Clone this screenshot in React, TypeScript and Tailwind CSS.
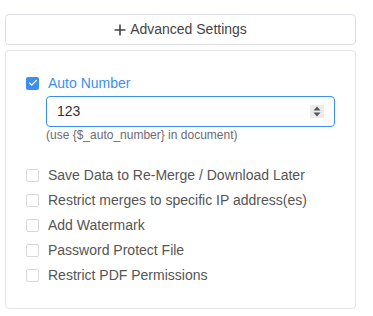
import { Check } from 'lucide-react';

const options = [
    'Save Data to Re-Merge / Download Later',
    'Restrict merges to specific IP address(es)',
    'Add Watermark',
    'Password Protect File',
    'Restrict PDF Permissions',
];

export default function App() {
    return (
        <div className="w-[373px] h-[316px] bg-white pt-[14px] pl-[5px] font-['Liberation_Sans',Arial,sans-serif]">
            {/* Toggle button */}
            <button className="w-[351px] h-[31px] flex items-center justify-center gap-[4px] border border-[#dcdde3] rounded-[4px] text-[14px] text-[#444]">
                <svg width="12" height="12" viewBox="0 0 12 12">
                    <path d="M6 0.5 V11.5 M0.5 6 H11.5" stroke="#444" strokeWidth="1.6" />
                </svg>
                Advanced Settings
            </button>

            {/* Settings panel */}
            <div className="w-[351px] h-[259px] mt-[5px] border border-[#e3e4ea] rounded-[4px] pt-[24px] pl-[20px]">
                <label className="flex items-center gap-[9px] h-[16px]">
                    <span className="w-[13px] h-[13px] rounded-[2px] bg-[#3b8ff0] flex items-center justify-center">
                        <Check size={10} strokeWidth={3} className="text-white" />
                    </span>
                    <span className="text-[14px] text-[#3b8ff0]">Auto Number</span>
                </label>

                <div className="ml-[20px] mt-[5px] w-[289px] h-[31px] border border-[#3b8ff0] rounded-[4px] flex items-center pl-[10px] pr-[10px]">
                    <span className="flex-1 text-[14px] text-[#333]">123</span>
                    <span className="w-[14px] h-[13px] bg-[#ececec] flex items-center justify-center">
                        <svg width="8" height="11" viewBox="0 0 8 11">
                            <path d="M4 0.5 L7.5 4.5 L0.5 4.5 Z" fill="#555" />
                            <path d="M4 10.5 L7.5 6.5 L0.5 6.5 Z" fill="#555" />
                        </svg>
                    </span>
                </div>
                <p className="ml-[20px] mt-[1px] text-[12px] text-[#6b6b73] leading-[15px]">
                    (use {'{$_auto_number}'} in document)
                </p>

                <div className="mt-[24px] flex flex-col gap-[8px]">
                    {options.map((opt) => (
                        <label key={opt} className="flex items-center gap-[9px] h-[17px]">
                            <span className="w-[13px] h-[13px] rounded-[2px] border border-[#d8d9de] bg-white" />
                            <span className="text-[14px] text-[#555]">{opt}</span>
                        </label>
                    ))}
                </div>
            </div>
        </div>
    );
}
